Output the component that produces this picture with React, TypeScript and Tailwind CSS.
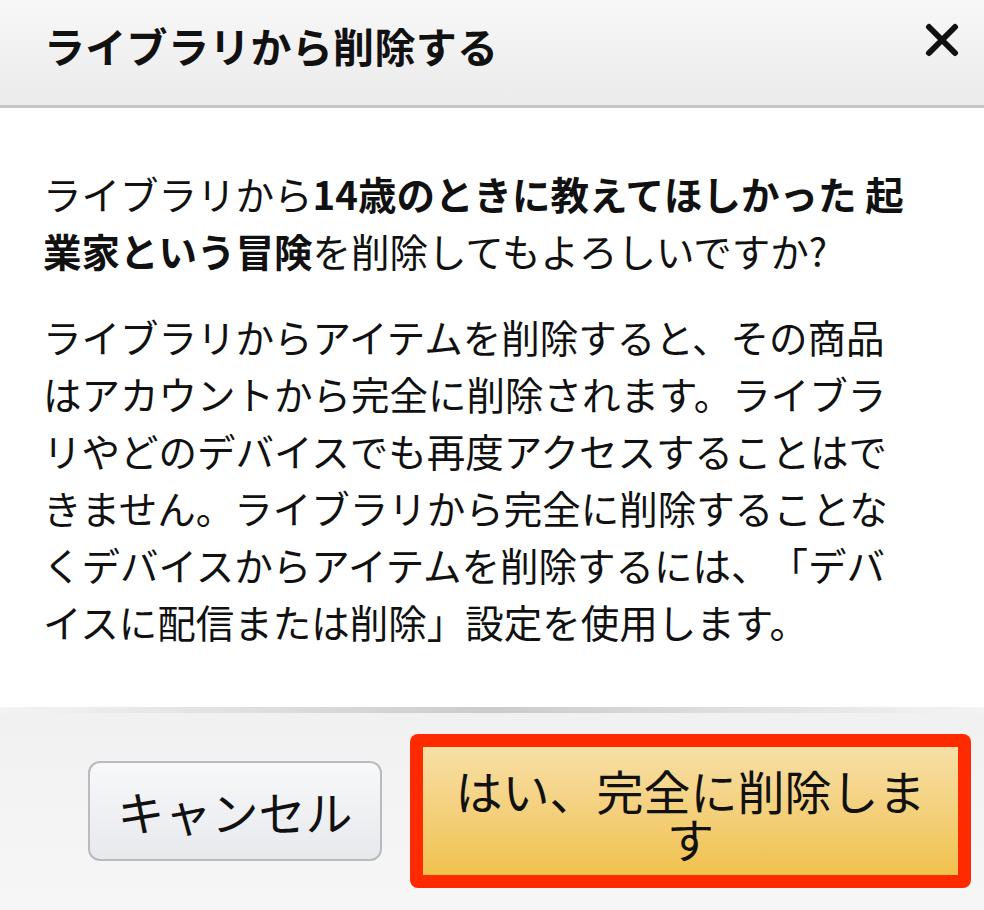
const FONT = "font-['Noto_Sans_CJK_JP','Noto_Sans',sans-serif]"

function CloseIcon() {
  return (
    <svg width="34" height="34" viewBox="0 0 34 34" fill="none">
      <path d="M4 4 L30 30 M30 4 L4 30" stroke="#111" strokeWidth="6" strokeLinecap="round" />
    </svg>
  )
}

export default function App() {
  return (
    <div className={`${FONT} w-[984px] h-[910px] flex flex-col bg-white text-[#111] overflow-hidden [text-spacing-trim:space-all]`}>
      {/* Header */}
      <div className="h-[108px] flex-shrink-0 flex items-start justify-between pl-[44px] pr-[25px] pt-[16px] bg-gradient-to-b from-[#f7f7f7] to-[#ebebeb] border-b-[3px] border-[#c6c6c6]">
        <h1 className="text-[41px] font-bold leading-[58px] tracking-[0.3px]">ライブラリから削除する</h1>
        <button className="mt-[7px] w-[34px] h-[34px] flex items-center justify-center">
          <CloseIcon />
        </button>
      </div>

      {/* Body */}
      <div className="flex-1 pl-[43px] pr-[71px] pt-[57px] text-[38.5px] leading-[57px]">
        <p>
          ライブラリから<span className="font-bold">14歳のときに教えてほしかった 起業家という冒険</span>を削除してもよろしいですか?
        </p>
        <p className="mt-[29px]">
          ライブラリからアイテムを削除すると、その商品はアカウントから完全に削除されます。ライブラリやどのデバイスでも再度アクセスすることはできません。ライブラリから完全に削除することなくデバイスからアイテムを削除するには、「デバイスに配信または削除」設定を使用します。
        </p>
      </div>

      {/* Footer */}
      <div className="h-[6px] flex-shrink-0 bg-gradient-to-r from-[#f4f4f4] via-[#cbcbcb] to-[#f4f4f4]" />
      <div className="h-[197px] flex-shrink-0 bg-gradient-to-b from-[#f1f1f1] to-[#f6f6f6] flex items-center justify-end gap-[28px] pr-[13px] pt-[13px] pb-[15px]">
        <button className="w-[294px] h-[100px] rounded-[12px] border-2 border-[#b9bbbf] bg-gradient-to-b from-[#f7f8fa] to-[#e7e9ec] text-[47px] leading-none text-[#111] flex items-center justify-center">
          キャンセル
        </button>
        <div className="w-[561px] h-[154px] rounded-[8px] bg-[#ff2a00] p-[13px]">
          <button className="w-full h-full bg-gradient-to-b from-[#f7dfa5] to-[#f0c14b] px-[24px] pt-[6px] text-[47px] leading-[48px] text-[#111] text-center">
            はい、完全に削除します
          </button>
        </div>
      </div>
    </div>
  )
}
